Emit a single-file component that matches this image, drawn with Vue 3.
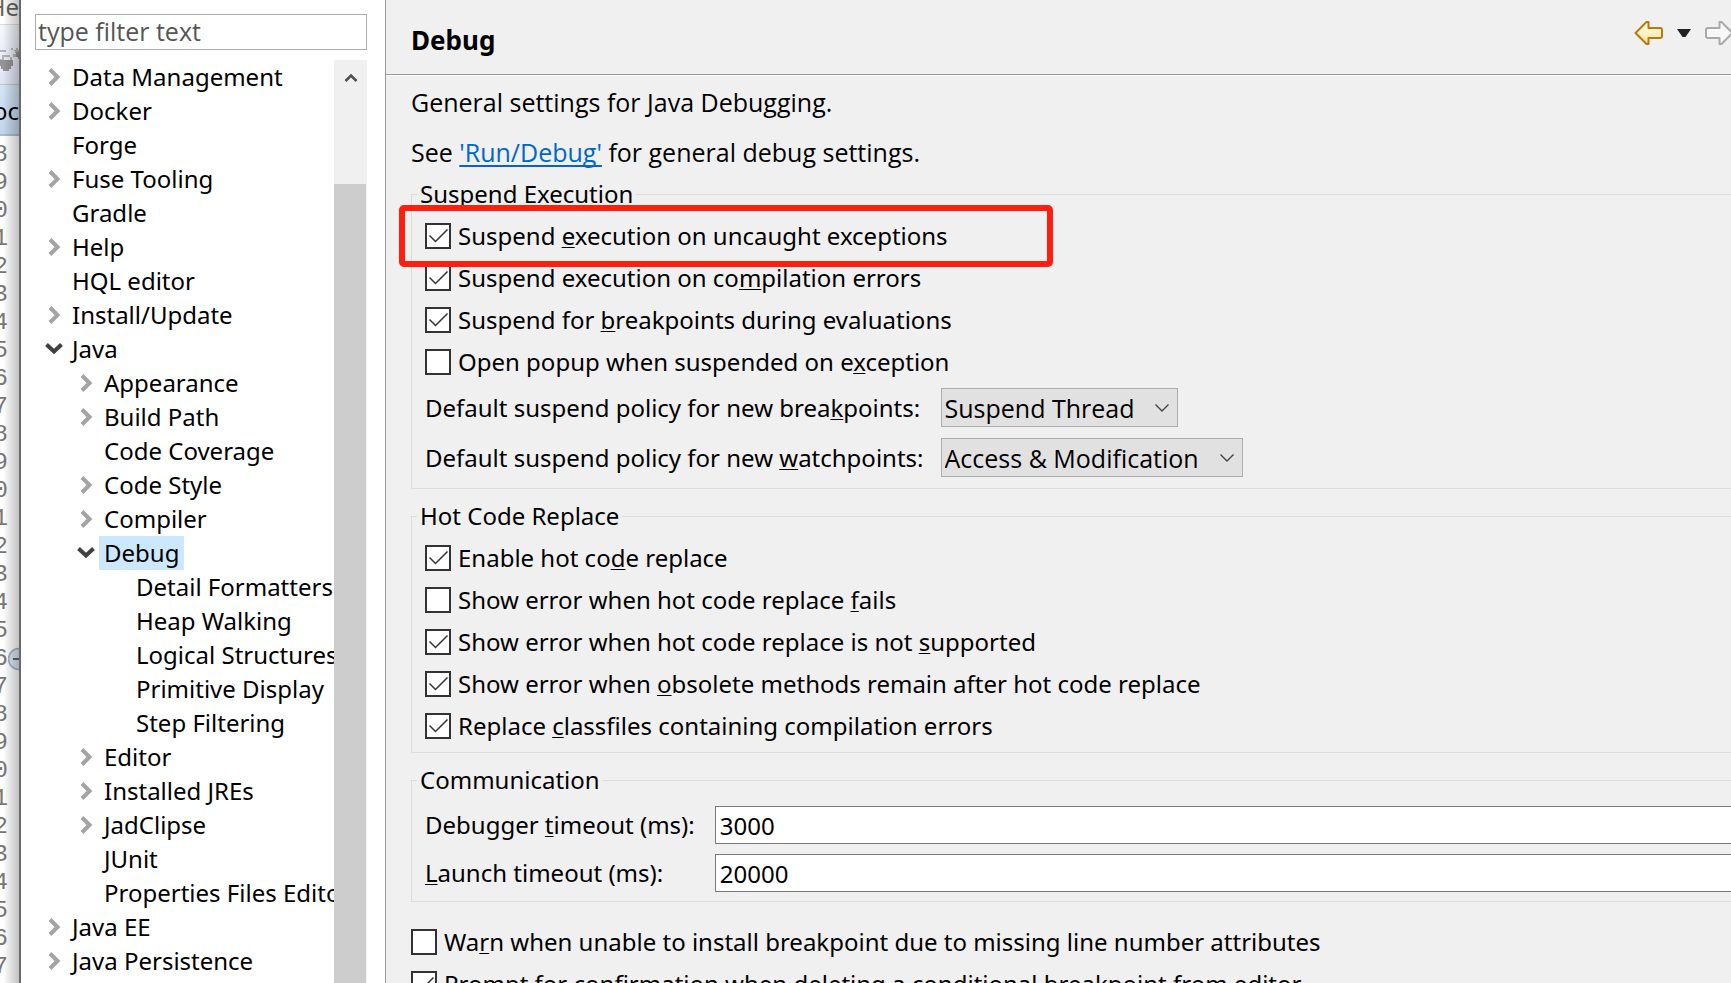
<script setup>
import { ref } from 'vue'

const tree = ref([
  { text: 'Data Management', level: 0, state: 'closed' },
  { text: 'Docker', level: 0, state: 'closed' },
  { text: 'Forge', level: 0 },
  { text: 'Fuse Tooling', level: 0, state: 'closed' },
  { text: 'Gradle', level: 0 },
  { text: 'Help', level: 0, state: 'closed' },
  { text: 'HQL editor', level: 0 },
  { text: 'Install/Update', level: 0, state: 'closed' },
  { text: 'Java', level: 0, state: 'open' },
  { text: 'Appearance', level: 1, state: 'closed' },
  { text: 'Build Path', level: 1, state: 'closed' },
  { text: 'Code Coverage', level: 1 },
  { text: 'Code Style', level: 1, state: 'closed' },
  { text: 'Compiler', level: 1, state: 'closed' },
  { text: 'Debug', level: 1, state: 'open', selected: true },
  { text: 'Detail Formatters', level: 2 },
  { text: 'Heap Walking', level: 2 },
  { text: 'Logical Structures', level: 2 },
  { text: 'Primitive Display', level: 2 },
  { text: 'Step Filtering', level: 2 },
  { text: 'Editor', level: 1, state: 'closed' },
  { text: 'Installed JREs', level: 1, state: 'closed' },
  { text: 'JadClipse', level: 1, state: 'closed' },
  { text: 'JUnit', level: 1 },
  { text: 'Properties Files Editor', level: 1 },
  { text: 'Java EE', level: 0, state: 'closed' },
  { text: 'Java Persistence', level: 0, state: 'closed' },
])

// Each label is split into the text before, at and after its mnemonic letter.
const suspend = ref([
  { id: 's1', label: ['Suspend ', 'e', 'xecution on uncaught exceptions'], on: true, marked: true },
  { id: 's2', label: ['Suspend execution on co', 'm', 'pilation errors'], on: true },
  { id: 's3', label: ['Suspend for ', 'b', 'reakpoints during evaluations'], on: true },
  { id: 's4', label: ['Open popup when suspended on e', 'x', 'ception'], on: false },
])
const hot = ref([
  { id: 'h1', label: ['Enable hot co', 'd', 'e replace'], on: true },
  { id: 'h2', label: ['Show error when hot code replace ', 'f', 'ails'], on: false },
  { id: 'h3', label: ['Show error when hot code replace is not ', 's', 'upported'], on: true },
  { id: 'h4', label: ['Show error when ', 'o', 'bsolete methods remain after hot code replace'], on: true },
  { id: 'h5', label: ['Replace ', 'c', 'lassfiles containing compilation errors'], on: true },
])
const extra = ref([
  { id: 'x1', label: ['Wa', 'r', 'n when unable to install breakpoint due to missing line number attributes'], on: false },
  { id: 'x2', label: ['', 'P', 'rompt for confirmation when deleting a conditional breakpoint from editor'], on: true },
])
const filter = ref('')
const debuggerTimeout = ref('3000')
const launchTimeout = ref('20000')
const lines = Array.from({ length: 30 }, (_, i) => (i + 8) % 10)
</script>

<template>
  <div class="screen">
    <aside class="editor" aria-hidden="true">
      <div class="menu"><span>He</span></div>
      <div class="tools">
        <svg width="21" height="26" viewBox="0 0 21 26" shape-rendering="crispEdges">
          <path fill="#b4b4b4" d="M0 4h6v2H0zM2 9h8v2H2zM0 13h2v-2h2v3h-4zM10 11h2v3h-2zM11 2h2v2h-2zM14 4h2v-2h2v2h3v3h-6v-2h-1zM13 8h3v3h-3z" />
          <path fill="#949494" d="M0 14h13v6h-2v3h-2v2H3v-2H1v-3H0zM16 6h5v7h-3v-2h-2z" />
        </svg>
      </div>
      <div class="tab"><span>oc</span></div>
      <div class="gutter">
        <div v-for="(n, i) in lines" :key="i" class="line">
          <span>{{ n }}</span>
          <svg v-if="i === 18" class="fold" width="20" height="24" viewBox="0 0 20 24">
            <circle cx="11" cy="12" r="10.5" fill="#dde7f2" stroke="#a3b4c8" stroke-width="1.6" />
            <path d="M5 12h14" stroke="#46586e" stroke-width="1.8" />
          </svg>
        </div>
      </div>
    </aside>

    <nav class="sidebar">
      <input v-model="filter" class="filter" type="text" placeholder="type filter text" aria-label="type filter text" />
      <div class="tree-area">
        <ul class="tree">
          <li v-for="item in tree" :key="item.text" class="row" :class="'level' + item.level">
            <span class="twisty">
              <svg v-if="item.state === 'closed'" width="14" height="20" viewBox="0 0 14 20">
                <path d="M3 2.5 10.5 10 3 17.5" fill="none" stroke="#a3a3a3" stroke-width="4" />
              </svg>
              <svg v-else-if="item.state === 'open'" width="18" height="14" viewBox="0 0 18 14">
                <path d="M1.5 2.5 9 9.5 16.500 2.500" fill="none" stroke="#404040" stroke-width="4" />
              </svg>
            </span>
            <span class="name" :class="{ selected: item.selected }">{{ item.text }}</span>
          </li>
        </ul>
        <div class="scrollbar">
          <button class="up" type="button" aria-label="Scroll up">
            <svg width="14" height="12" viewBox="0 0 14 12"><path d="M1.500 9 7 3.500 12.500 9" fill="none" stroke="#505050" stroke-width="2.600" /></svg>
          </button>
          <div class="thumb"></div>
        </div>
      </div>
    </nav>

    <main class="page">
      <header class="head">
        <h1>Debug</h1>
        <div class="history">
          <button type="button" aria-label="Back">
            <svg width="30" height="26" viewBox="0 0 30 26">
              <defs><linearGradient id="gold" x1="0" y1="0" x2="0" y2="1"><stop offset="0" stop-color="#fffdf0" /><stop offset="1" stop-color="#fde49b" /></linearGradient></defs>
              <path d="M1.500 13 12.500 2h2v6H26q2 0 2 2v6q0 2-2 2H14.500v6h-2z" fill="url(#gold)" stroke="#b87a0c" stroke-width="2" stroke-linejoin="round" />
            </svg>
          </button>
          <button type="button" aria-label="History menu">
            <svg width="14" height="8" viewBox="0 0 14 8"><path d="M0 0h14L8.500 8h-3z" fill="#222" /></svg>
          </button>
          <button type="button" aria-label="Forward" class="forward">
            <svg width="30" height="26" viewBox="0 0 30 26">
              <path d="M28.500 13 17.500 2h-2v6H4q-2 0-2 2v6q0 2 2 2h11.500v6h2z" fill="#f7f7f7" stroke="#a9a9a9" stroke-width="2" stroke-linejoin="round" />
            </svg>
          </button>
        </div>
      </header>

      <div class="body">
        <p>General settings for Java Debugging.</p>
        <p>See <a href="#run-debug">'Run/Debug'</a> for general debug settings.</p>

        <fieldset class="first">
          <legend>Suspend Execution</legend>
          <div v-for="c in suspend" :key="c.id" class="check" :class="{ marked: c.marked }">
            <span class="box">
              <input :id="c.id" v-model="c.on" type="checkbox" />
              <svg v-if="c.on" width="26" height="26" viewBox="0 0 26 26"><path d="M4.500 12.500 10.500 18.500 22.500 6.500" fill="none" stroke="#333" stroke-width="1.500" /></svg>
            </span>
            <label :for="c.id">{{ c.label[0] }}<u>{{ c.label[1] }}</u>{{ c.label[2] }}</label>
          </div>
          <div class="policies">
            <label for="bp">Default suspend policy for new brea<u>k</u>points:</label>
            <span class="combo">
              <select id="bp"><option>Suspend Thread</option><option>Suspend VM</option></select>
              <svg width="14" height="10" viewBox="0 0 14 10"><path d="M.5 1.500 7 8 13.500 1.500" fill="none" stroke="#444" stroke-width="1.400" /></svg>
            </span>
            <label for="wp">Default suspend policy for new <u>w</u>atchpoints:</label>
            <span class="combo">
              <select id="wp"><option>Access &amp; Modification</option><option>Access</option></select>
              <svg width="14" height="10" viewBox="0 0 14 10"><path d="M.5 1.500 7 8 13.500 1.500" fill="none" stroke="#444" stroke-width="1.400" /></svg>
            </span>
          </div>
        </fieldset>

        <fieldset>
          <legend>Hot Code Replace</legend>
          <div v-for="c in hot" :key="c.id" class="check">
            <span class="box">
              <input :id="c.id" v-model="c.on" type="checkbox" />
              <svg v-if="c.on" width="26" height="26" viewBox="0 0 26 26"><path d="M4.500 12.500 10.500 18.500 22.500 6.500" fill="none" stroke="#333" stroke-width="1.500" /></svg>
            </span>
            <label :for="c.id">{{ c.label[0] }}<u>{{ c.label[1] }}</u>{{ c.label[2] }}</label>
          </div>
        </fieldset>

        <fieldset>
          <legend>Communication</legend>
          <div class="timeouts">
            <label for="dt">Debugger <u>t</u>imeout (ms):</label>
            <input id="dt" v-model="debuggerTimeout" type="text" />
            <label for="lt"><u>L</u>aunch timeout (ms):</label>
            <input id="lt" v-model="launchTimeout" type="text" />
          </div>
        </fieldset>

        <div class="extra">
          <div v-for="c in extra" :key="c.id" class="check">
            <span class="box">
              <input :id="c.id" v-model="c.on" type="checkbox" />
              <svg v-if="c.on" width="26" height="26" viewBox="0 0 26 26"><path d="M4.500 12.500 10.500 18.500 22.500 6.500" fill="none" stroke="#333" stroke-width="1.500" /></svg>
            </span>
            <label :for="c.id">{{ c.label[0] }}<u>{{ c.label[1] }}</u>{{ c.label[2] }}</label>
          </div>
        </div>
      </div>
    </main>
  </div>
</template>

<style>
body {
  background: #f0f0f0;
  overflow: hidden;
}
</style>

<style scoped>
.screen,
.screen * {
  box-sizing: border-box;
}
.screen {
  display: flex;
  height: 100vh;
  overflow: hidden;
  font: 24px/32px "Noto Sans", "Open Sans", sans-serif;
  color: #000;
}
button,
input,
select {
  font: inherit;
  color: inherit;
  margin: 0;
}
button {
  border: 0;
  padding: 0;
  background: none;
  display: flex;
}
svg {
  display: block;
  flex: none;
}

/* Editor strip behind the dialog */
.editor {
  position: relative;
  flex: none;
  width: 21px;
  overflow: hidden;
  background: #fff;
  border-right: 2px solid #6a6a6a;
}
.editor::after {
  content: "";
  position: absolute;
  inset: 0;
  background: linear-gradient(to right, rgba(0, 0, 0, 0) 15%, rgba(0, 0, 0, 0.24));
}
.menu,
.tab {
  display: flex;
  justify-content: flex-end;
}
.menu {
  height: 25px;
  border-bottom: 1px solid #ddd;
  color: #666;
  line-height: 14px;
}
.tools {
  height: 60px;
  padding-top: 21px;
  background: linear-gradient(#f5f7fd, #dfe4f5);
  border-bottom: 1px solid #c4c4c4;
}
.tab {
  height: 51px;
  align-items: center;
  padding-top: 2px;
  background: linear-gradient(#d3e4f5, #c2d6ec);
  border-bottom: 2px solid #a9bcd4;
}
.gutter {
  padding-top: 5px;
}
.line {
  display: flex;
  align-items: center;
  height: 28px;
  font: 24px/28px "Liberation Mono", monospace;
  color: #787878;
}
.line span {
  flex: none;
  width: 8px;
  display: flex;
  justify-content: flex-end;
}

/* Category tree */
.sidebar {
  flex: none;
  width: 365px;
  display: flex;
  flex-direction: column;
  padding: 14px 18px 0 14px;
  background: #fff;
  border-right: 1px solid #999;
}
.filter {
  flex: none;
  width: 100%;
  height: 36px;
  padding: 0 2px 2px;
  border: 1px solid #abadb3;
  outline: 0;
  font: 25px/32px "Open Sans", sans-serif;
}
.filter::placeholder {
  color: #555;
  opacity: 1;
}
.tree-area {
  flex: 1;
  min-height: 0;
  display: flex;
  margin-top: 10px;
}
.tree {
  flex: 1;
  min-width: 0;
  margin: 0;
  padding: 0;
  list-style: none;
  overflow: hidden;
}
.row {
  display: flex;
  align-items: center;
  height: 34px;
  padding-left: 8px;
  white-space: nowrap;
}
.level1 {
  padding-left: 40px;
}
.level2 {
  padding-left: 72px;
}
.twisty {
  flex: none;
  width: 22px;
  margin-right: 2px;
  display: flex;
  justify-content: center;
}
.name {
  padding: 0 5px;
  line-height: 34px;
}
.selected {
  background: #cce8ff;
}
.scrollbar {
  flex: none;
  width: 33px;
  display: flex;
  flex-direction: column;
  background: #f0f0f0;
}
.up {
  height: 124px;
  justify-content: center;
  padding-top: 12px;
}
.thumb {
  flex: 1;
  width: 32px;
  background: #cdcdcd;
}

/* Preference page */
.page {
  flex: 1;
  min-width: 0;
  background: #f0f0f0;
  overflow: hidden;
  white-space: nowrap;
}
.head {
  display: flex;
  justify-content: space-between;
  height: 75px;
  padding-left: 25px;
  border-bottom: 1px solid #999;
  box-shadow: 0 1px 0 #fff;
}
h1 {
  margin: 24px 0 0;
  font-size: 26px;
  line-height: 32px;
}
.history {
  display: flex;
  align-items: center;
  gap: 13px;
  height: 66px;
  margin-right: -3px;
}
.body {
  padding: 10px 0 0 25px;
}
p {
  margin: 0 0 16px;
  font: 25px/34px "Open Sans", sans-serif;
}
p + p {
  margin-bottom: 9px;
}
a {
  color: #0066cc;
  text-decoration-thickness: 2px;
  text-underline-offset: 3px;
  text-decoration-skip-ink: none;
}
u {
  text-decoration-thickness: 1px;
  text-underline-offset: 2px;
  text-decoration-skip-ink: none;
}
fieldset {
  min-width: 0;
  margin: 0 0 11px;
  padding: 5px 0 5px 13px;
  border: 1px solid #dcdcdc;
  border-right: 0;
}
legend {
  margin-left: -8px;
  padding: 0 3px;
}
.first {
  padding-bottom: 11px;
}
.check {
  position: relative;
  display: flex;
  align-items: center;
  gap: 7px;
  height: 42px;
}
.box {
  display: grid;
}
.box > * {
  grid-area: 1 / 1;
  pointer-events: none;
}
.box input {
  appearance: none;
  width: 26px;
  height: 26px;
  border: 2px solid #333;
  background: #fff;
  pointer-events: auto;
}
.marked::after {
  content: "";
  box-sizing: border-box;
  position: absolute;
  top: -10px;
  left: -26px;
  width: 654px;
  height: 62px;
  border: 6px solid #ff1e10;
  border-radius: 5px;
  pointer-events: none;
  z-index: 1;
}
.policies,
.timeouts {
  display: grid;
  grid-template-columns: max-content 1fr;
  align-items: center;
}
.policies {
  gap: 11px 17px;
  padding-top: 5px;
}
.combo {
  display: grid;
  justify-self: start;
  align-items: center;
}
.combo > * {
  grid-area: 1 / 1;
}
.combo svg {
  justify-self: end;
  margin-right: 9px;
  pointer-events: none;
}
select {
  appearance: none;
  height: 39px;
  padding: 0 42px 0 3px;
  border: 1px solid #adadad;
  border-radius: 0;
  background: #e1e1e1;
  font: 25px/32px "Open Sans", sans-serif;
}
.timeouts {
  gap: 10px 20px;
  padding: 5px 0 4px;
}
.timeouts input {
  width: 100%;
  height: 38px;
  padding: 0 4px;
  border: 1px solid #7a7a7a;
  border-right: 0;
  outline: 0;
  background: #fff;
}
.extra {
  padding-top: 8px;
}
</style>
